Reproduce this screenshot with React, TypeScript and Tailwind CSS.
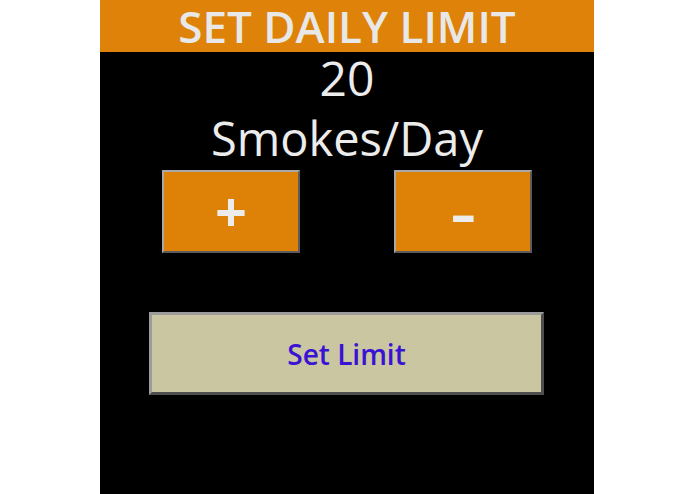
import React from "react";

const font = { fontFamily: '"Open Sans", "Noto Sans", sans-serif' };

function StepButton({ children }: { children: React.ReactNode }) {
  return (
    <button className="w-[138px] h-[83px] bg-[#dd8107] border-2 border-t-[#a8a8a8] border-l-[#a8a8a8] border-b-[#5c5c5c] border-r-[#5c5c5c] text-[#ececec] font-bold leading-none flex items-center justify-center">
      {children}
    </button>
  );
}

export default function App() {
  return (
    <div className="w-[695px] h-[494px] bg-white" style={font}>
      <div className="ml-[100px] w-[494px] h-[494px] bg-black flex flex-col">
        <div className="h-[52px] bg-[#de8209] flex items-center justify-center text-[44px] font-semibold leading-none text-[#e8e8e8]">
          SET DAILY LIMIT
        </div>
        <div className="text-center text-[48px] leading-[52px] text-[#ececec]">20</div>
        <div className="mt-[8px] text-center text-[47px] leading-[52px] text-[#ececec]">
          Smokes/Day
        </div>
        <div className="mt-[6px] px-[62px] flex justify-between">
          <StepButton>
            <span className="text-[56px] -mt-[3px]">+</span>
          </StepButton>
          <StepButton>
            <span className="text-[52px] mt-[2px] inline-block scale-x-[1.5]">-</span>
          </StepButton>
        </div>
        <div className="mt-[59px] px-[49px]">
          <button className="w-[395px] h-[83px] bg-[#c9c6a1] border-[3px] border-t-[#9c9c9c] border-l-[#9c9c9c] border-b-[#4e4e4e] border-r-[#4e4e4e] text-[#3a12d4] text-[28px] font-semibold flex items-center justify-center">
            Set Limit
          </button>
        </div>
      </div>
    </div>
  );
}
